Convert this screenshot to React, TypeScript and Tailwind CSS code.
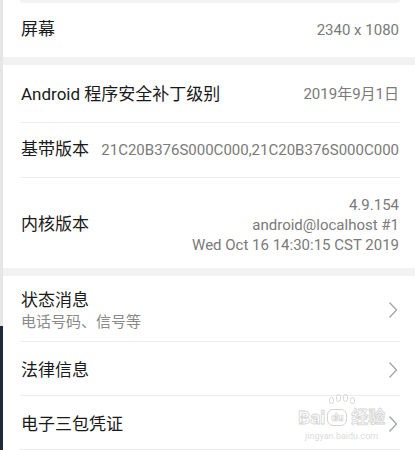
import React from 'react';

const FONT = { fontFamily: 'Roboto, "Noto Sans CJK SC", "Noto Sans", sans-serif' };

const Chevron = () => (
  <svg width="10" height="18" viewBox="0 0 10 18" className="shrink-0">
    <path d="M1.5 1.5 L8.5 9 L1.5 16.5" fill="none" stroke="#a3a3a3" strokeWidth="1.3" />
  </svg>
);

const Divider = () => <div className="h-px bg-[#ececec] ml-[17px] mr-[15px]" />;

const Gap = ({ h }: { h: string }) => <div className={`${h} bg-[#f2f2f2]`} />;

const InfoRow = ({ label, value, h }: { label: string; value: React.ReactNode; h: string }) => (
  <div className={`flex items-center justify-between pl-[18px] pr-[16px] ${h}`}>
    <span className="text-[17px] text-[#1a1a1a] whitespace-nowrap">{label}</span>
    <span className="text-[15px] text-[#7a7a7a] text-right leading-[20px] whitespace-nowrap">{value}</span>
  </div>
);

const LinkRow = ({ label, sub, h }: { label: string; sub?: string; h: string }) => (
  <div className={`flex items-center justify-between pl-[18px] pr-[17px] pt-[3px] ${h}`}>
    <div className="flex flex-col">
      <span className="text-[17px] text-[#1a1a1a] leading-[23px]">{label}</span>
      {sub && <span className="text-[15px] text-[#8a8a8a] leading-[20px]">{sub}</span>}
    </div>
    <Chevron />
  </div>
);

const Watermark = () => (
  <div className="absolute left-[298px] top-[408px] flex flex-col items-center pointer-events-none select-none">
    <div className="flex items-center gap-[2px] text-[19px] font-bold leading-none text-transparent" style={{ WebkitTextStroke: '0.8px #d4d4d4' }}>
      <span>Bai</span>
      <span className="relative inline-flex items-center justify-center w-[20px] h-[17px] rounded-[6px] border border-[#d4d4d4] text-[11px]" style={{ WebkitTextStroke: '0.6px #d4d4d4' }}>
        du
        <span className="absolute -top-[13px] left-[1px] flex gap-[2px]">
          <span className="w-[5px] h-[7px] rounded-full border border-[#d8d8d8]" />
          <span className="w-[5px] h-[8px] rounded-full border border-[#d8d8d8] -mt-[3px]" />
          <span className="w-[5px] h-[8px] rounded-full border border-[#d8d8d8] -mt-[3px]" />
          <span className="w-[5px] h-[7px] rounded-full border border-[#d8d8d8]" />
        </span>
      </span>
      <span className="text-[17px] ml-[2px]">经验</span>
    </div>
    <span className="text-[9px] text-[#dcdcdc] leading-[14px] mt-[2px]">jingyan.baidu.com</span>
  </div>
);

export default function App() {
  return (
    <div className="relative w-[415px] h-[450px] overflow-hidden bg-white flex" style={FONT}>
      <div className="w-[3px] shrink-0 flex flex-col">
        <div className="h-[326px] bg-[#e6e6e6]" />
        <div className="flex-1 bg-[#1f2b3d]" />
      </div>
      <div className="flex-1 flex flex-col">
        <div className="h-[3px] bg-[#f3f3f3] ml-[17px] mr-[15px] rounded-b" />
        <InfoRow label="屏幕" value="2340 x 1080" h="h-[54px]" />
        <Gap h="h-[8px]" />
        <InfoRow label="Android 程序安全补丁级别" value="2019年9月1日" h="h-[57px] pt-[2px]" />
        <Divider />
        <InfoRow label="基带版本" value="21C20B376S000C000,21C20B376S000C000" h="h-[54px] pt-[1px]" />
        <Divider />
        <InfoRow
          label="内核版本"
          h="h-[91px] pt-[3px]"
          value={
            <>
              <div>4.9.154</div>
              <div>android@localhost #1</div>
              <div>Wed Oct 16 14:30:15 CST 2019</div>
            </>
          }
        />
        <Gap h="h-[8px]" />
        <LinkRow label="状态消息" sub="电话号码、信号等" h="h-[65px]" />
        <Divider />
        <LinkRow label="法律信息" h="h-[53px]" />
        <Divider />
        <LinkRow label="电子三包凭证" h="h-[53px]" />
        <Divider />
      </div>
      <Watermark />
    </div>
  );
}
